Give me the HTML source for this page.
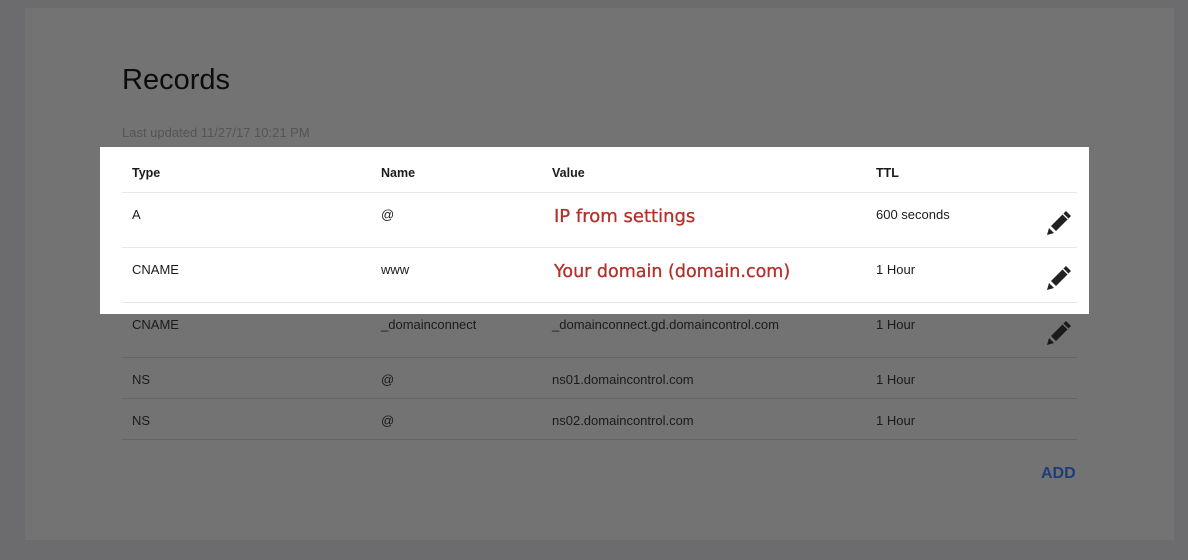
<!DOCTYPE html>
<html><head><style>
body{margin:0;width:1188px;height:560px;background:#6c6c6e;position:relative;overflow:hidden;font-family:"Liberation Sans",sans-serif;}
.card{position:absolute;left:25px;top:8px;width:1149px;height:532px;background:#737373;}
.w{position:absolute;left:100px;top:147px;width:989px;height:167px;background:#fff;}
.t{position:absolute;font-size:13px;color:#1b1b1b;white-space:nowrap;}
.h{font-weight:bold;font-size:12.5px;}
.l{position:absolute;left:122px;width:955px;height:1px;background:#666;}
.lw{background:#e6e6e6;}
.r{position:absolute;color:#b3302a;font-size:18px;font-family:"DejaVu Sans",sans-serif;white-space:nowrap;-webkit-text-stroke:0.3px #b3302a;}
svg{position:absolute;}
</style></head><body>
<div class="card"></div>
<div class="t" style="left:122px;top:64px;font-size:29px;color:#0c0c0c">Records</div>
<div class="t" style="left:122px;top:125px;font-size:13px;color:#555">Last updated 11/27/17 10:21 PM</div>
<div class="w"></div>
<div class="t h" style="left:132px;top:166px">Type</div>
<div class="t h" style="left:381px;top:166px">Name</div>
<div class="t h" style="left:552px;top:166px">Value</div>
<div class="t h" style="left:876px;top:166px">TTL</div>
<div class="l lw" style="top:192px"></div>
<div class="t" style="left:132px;top:207px">A</div>
<div class="t" style="left:381px;top:207px">@</div>
<div class="r" style="left:554px;top:206px">IP from settings</div>
<div class="t" style="left:876px;top:207px">600 seconds</div>
<div class="l lw" style="top:247px"></div>
<div class="t" style="left:132px;top:262px">CNAME</div>
<div class="t" style="left:381px;top:262px">www</div>
<div class="r" style="left:554px;top:262px;font-size:17.5px">Your domain (domain.com)</div>
<div class="t" style="left:876px;top:262px">1 Hour</div>
<div class="l lw" style="top:302px"></div>
<div class="t" style="left:132px;top:317px">CNAME</div>
<div class="t" style="left:381px;top:317px">_domainconnect</div>
<div class="t" style="left:552px;top:317px">_domainconnect.gd.domaincontrol.com</div>
<div class="t" style="left:876px;top:317px">1 Hour</div>
<div class="l" style="top:357px"></div>
<div class="t" style="left:132px;top:372px">NS</div>
<div class="t" style="left:381px;top:372px">@</div>
<div class="t" style="left:552px;top:372px">ns01.domaincontrol.com</div>
<div class="t" style="left:876px;top:372px">1 Hour</div>
<div class="l" style="top:398px"></div>
<div class="t" style="left:132px;top:413px">NS</div>
<div class="t" style="left:381px;top:413px">@</div>
<div class="t" style="left:552px;top:413px">ns02.domaincontrol.com</div>
<div class="t" style="left:876px;top:413px">1 Hour</div>
<div class="l" style="top:439px"></div>
<div class="t" style="left:1041px;top:465px;font-weight:bold;font-size:16px;color:#1c3d78">ADD</div>
<svg width="26" height="26" viewBox="0 0 26 26" style="left:1046px;top:210px"><path d="M20 1l5 5-15 15-5-5z M3 18l5 5-7 2z" fill="#222"/><path d="M17 4l5 5" stroke="#fff" stroke-width="1.3"/></svg>
<svg width="26" height="26" viewBox="0 0 26 26" style="left:1046px;top:265px"><path d="M20 1l5 5-15 15-5-5z M3 18l5 5-7 2z" fill="#222"/><path d="M17 4l5 5" stroke="#fff" stroke-width="1.3"/></svg>
<svg width="26" height="26" viewBox="0 0 26 26" style="left:1046px;top:320px"><path d="M20 1l5 5-15 15-5-5z M3 18l5 5-7 2z" fill="#1a1a1a"/><path d="M17 4l5 5" stroke="#737373" stroke-width="1.3"/></svg>
</body></html>
